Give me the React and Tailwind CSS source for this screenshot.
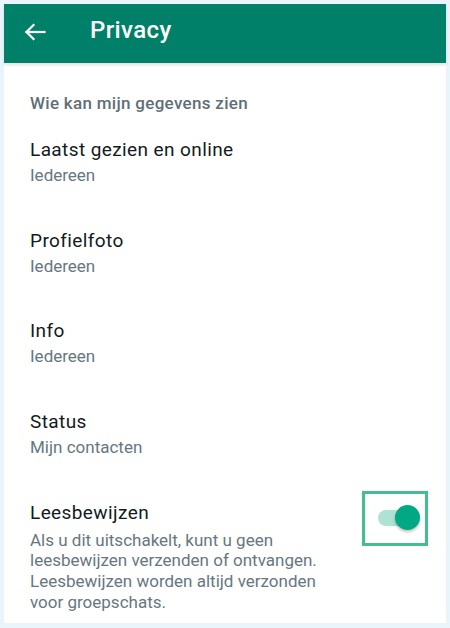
import React from 'react';

const rows = [
    { title: 'Laatst gezien en online', value: 'Iedereen' },
    { title: 'Profielfoto', value: 'Iedereen' },
    { title: 'Info', value: 'Iedereen' },
    { title: 'Status', value: 'Mijn contacten' },
];

function BackArrow() {
    return (
        <svg width="22" height="18" viewBox="0 0 22 18" fill="none" stroke="white" strokeWidth="2.2" strokeLinecap="square">
            <path d="M2.5 9H20.5" />
            <path d="M9.5 2L2.5 9L9.5 16" />
        </svg>
    );
}

export default function App() {
    return (
        <div className="w-[450px] h-[628px] bg-[#eaf4fb] p-1" style={{ fontFamily: 'Roboto, "Noto Sans", sans-serif' }}>
            <div className="bg-white h-[619px] flex flex-col">
                {/* top bar */}
                <div className="h-[59px] bg-[#008069] flex items-center pb-[7px] shadow-[0_2px_3px_rgba(0,0,0,0.12)]">
                    <div className="ml-[20px] w-[22px] flex items-center mt-[3px]">
                        <BackArrow />
                    </div>
                    <span className="ml-[44px] text-white text-[24px] tracking-[0.4px] font-medium">Privacy</span>
                </div>

                <div className="pl-[26px]">
                    <div className="mt-[30px] text-[17px] leading-[20px] font-medium tracking-[0.3px] text-[#5f6f78]">
                        Wie kan mijn gegevens zien
                    </div>

                    <div className="mt-[24px] flex flex-col gap-[41.7px]">
                        {rows.map((r) => (
                            <div key={r.title} className="flex flex-col">
                                <span className="text-[19px] leading-[26px] tracking-[0.4px] text-[#111b21]">{r.title}</span>
                                <span className="text-[17px] leading-[22px] mt-[1px] text-[#667781]">{r.value}</span>
                            </div>
                        ))}

                        <div className="flex items-start justify-between pr-[18px]">
                            <div className="flex flex-col">
                                <span className="text-[19px] leading-[26px] tracking-[0.4px] text-[#111b21]">Leesbewijzen</span>
                                <span className="text-[17px] leading-[20.7px] mt-[3.8px] text-[#667781]">
                                    Als u dit uitschakelt, kunt u geen<br />
                                    leesbewijzen verzenden of ontvangen.<br />
                                    Leesbewijzen worden altijd verzonden<br />
                                    voor groepschats.
                                </span>
                            </div>
                            <div className="w-[66px] h-[55px] mt-[-9px] border-[3px] border-[#41bf8f] flex items-center justify-center">
                                <div className="relative w-[36px] h-[16px] rounded-full bg-[#aee3d3] ml-[2px]">
                                    <div className="absolute right-[-6px] top-[-5px] w-[25px] h-[25px] rounded-full bg-[#00a884] shadow-[0_2px_3px_rgba(0,0,0,0.25)]" />
                                </div>
                            </div>
                        </div>
                    </div>
                </div>
            </div>
        </div>
    );
}
